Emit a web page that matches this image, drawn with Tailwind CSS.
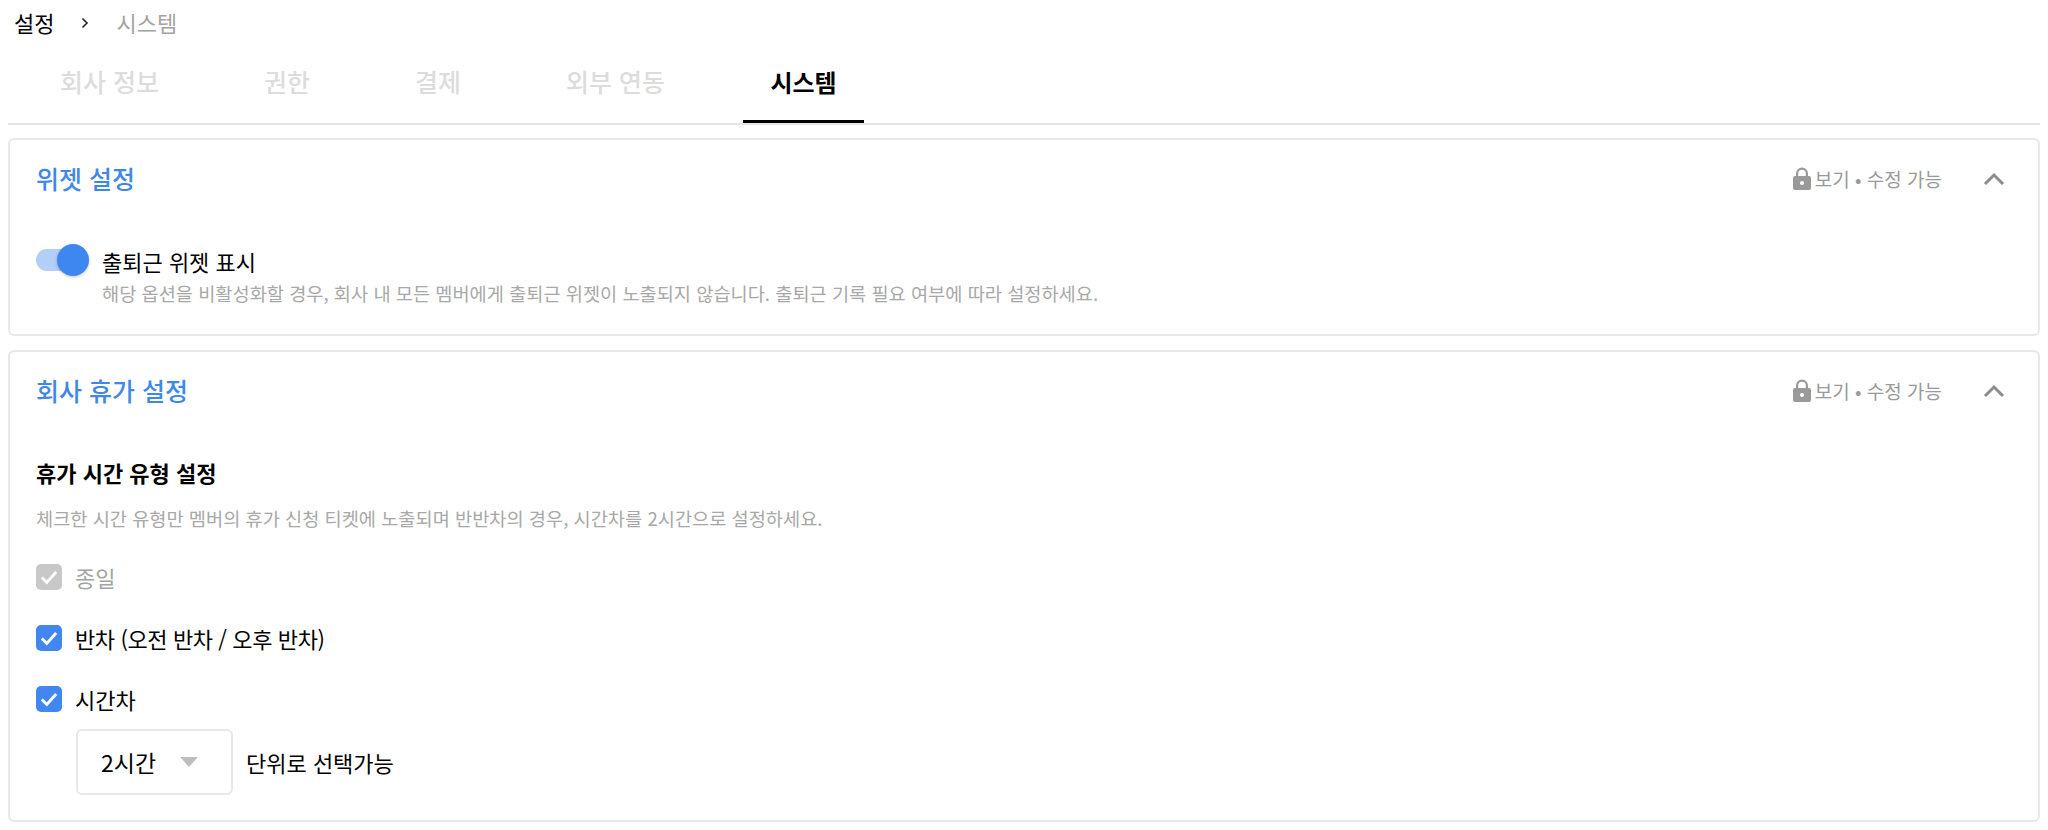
<!DOCTYPE html>
<html lang="ko">
<head>
  <meta charset="UTF-8">
  <title>시스템 설정</title>
  <script src="https://cdn.jsdelivr.net/npm/@tailwindcss/browser@4"></script>
</head>
<body class="bg-white h-[830px] overflow-hidden font-['Noto_Sans_CJK_KR','Noto_Sans',sans-serif] text-black">
  <!-- breadcrumb -->
  <div class="flex items-center h-[43px] pl-[14px] text-[22px] leading-none">
    <span>설정</span>
    <svg class="w-[12px] h-[12px] ml-[25px] mr-[25px] mt-[3px]" viewBox="0 0 12 12" fill="none" stroke="#222" stroke-width="1.6"><path d="M3.500 1.500 8 6l-4.500 4.500"/></svg>
    <span class="text-[#a3a3a3]">시스템</span>
  </div>

  <!-- tabs -->
  <div class="mx-[8px] flex h-[82px] border-b-2 border-[#e5e5e5] text-[25px] font-medium text-[#dcdcdc]">
    <div class="w-[204px] pl-[52px] pt-[20px] whitespace-nowrap">회사 정보</div>
    <div class="w-[151px] pl-[52px] pt-[20px] whitespace-nowrap">권한</div>
    <div class="w-[151px] pl-[52px] pt-[20px] whitespace-nowrap">결제</div>
    <div class="w-[229px] pl-[52px] pt-[20px] whitespace-nowrap">외부 연동</div>
    <div class="w-[121px] h-[80px] border-b-[3px] border-black text-black text-[24px] font-bold text-center pt-[21px]">시스템</div>
  </div>

  <!-- 위젯 설정 -->
  <section class="mx-[8px] mt-[13px] h-[198px] border-2 border-[#e8e8e8] rounded-[6px] px-[26px]">
    <div class="flex items-center justify-between h-[78px]">
      <h2 class="text-[25px] font-medium text-[#3f87e8]">위젯 설정</h2>
      <div class="flex items-center">
        <svg class="w-[20px] h-[24px]" viewBox="0 0 20 24" fill="#9a9a9a"><path fill-rule="evenodd" d="M4 9V6.500a6 6 0 0 1 12 0V9h1a2 2 0 0 1 2 2v10a2 2 0 0 1-2 2H3a2 2 0 0 1-2-2V11a2 2 0 0 1 2-2h1Zm2.200 0h7.600V6.500a3.800 3.800 0 0 0-7.600 0V9ZM10 14a2 2 0 1 0 0 4 2 2 0 0 0 0-4Z"/></svg>
        <span class="ml-[3px] text-[19px] text-[#9a9a9a]">보기 • 수정 가능</span>
        <svg class="w-[22px] h-[14px] ml-[41px] mr-[7px]" viewBox="0 0 22 14" fill="none" stroke="#8c8c8c" stroke-width="3"><path d="M2 12 11 3l9 9"/></svg>
      </div>
    </div>
    <div class="flex mt-[28px]">
      <div class="relative w-[52px] h-[30px] shrink-0 mt-[-1px]">
        <div class="absolute left-0 top-[4px] w-[48px] h-[22px] rounded-full bg-[#b4cff7]"></div>
        <div class="absolute right-[-1px] top-[-1px] w-[32px] h-[32px] rounded-full bg-[#3f87f0] shadow-[0_1px_3px_rgba(0,0,0,0.25)]"></div>
      </div>
      <div class="ml-[14px]">
        <div class="text-[22px] leading-[30px]">출퇴근 위젯 표시</div>
        <div class="mt-[2px] text-[18.65px] leading-[30px] text-[#a8a8a8]">해당 옵션을 비활성화할 경우, 회사 내 모든 멤버에게 출퇴근 위젯이 노출되지 않습니다. 출퇴근 기록 필요 여부에 따라 설정하세요.</div>
      </div>
    </div>
  </section>

  <!-- 회사 휴가 설정 -->
  <section class="mx-[8px] mt-[14px] h-[472px] border-2 border-[#e8e8e8] rounded-[6px] px-[26px]">
    <div class="flex items-center justify-between h-[78px]">
      <h2 class="text-[25px] font-medium text-[#3f87e8]">회사 휴가 설정</h2>
      <div class="flex items-center">
        <svg class="w-[20px] h-[24px]" viewBox="0 0 20 24" fill="#9a9a9a"><path fill-rule="evenodd" d="M4 9V6.500a6 6 0 0 1 12 0V9h1a2 2 0 0 1 2 2v10a2 2 0 0 1-2 2H3a2 2 0 0 1-2-2V11a2 2 0 0 1 2-2h1Zm2.200 0h7.600V6.500a3.800 3.800 0 0 0-7.600 0V9ZM10 14a2 2 0 1 0 0 4 2 2 0 0 0 0-4Z"/></svg>
        <span class="ml-[3px] text-[19px] text-[#9a9a9a]">보기 • 수정 가능</span>
        <svg class="w-[22px] h-[14px] ml-[41px] mr-[7px]" viewBox="0 0 22 14" fill="none" stroke="#8c8c8c" stroke-width="3"><path d="M2 12 11 3l9 9"/></svg>
      </div>
    </div>
    <h3 class="mt-[27px] text-[22px] leading-[30px] font-bold">휴가 시간 유형 설정</h3>
    <p class="mt-[18px] text-[18.65px] leading-[26px] text-[#a8a8a8]">체크한 시간 유형만 멤버의 휴가 신청 티켓에 노출되며 반반차의 경우, 시간차를 2시간으로 설정하세요.</p>
    <div class="mt-[31px] flex flex-col gap-[31px]">
      <label class="flex items-center h-[30px] text-[22px] text-[#a3a3a3]">
        <span class="flex items-center justify-center w-[26px] h-[26px] rounded-[5px] bg-[#c8c8c8]"><svg class="w-[22px] h-[22px]" viewBox="0 0 20 20" fill="none" stroke="#fff" stroke-width="2.600"><path d="m3.500 10.500 4.500 4.500 8.500-9.500"/></svg></span>
        <span class="ml-[13px]">종일</span>
      </label>
      <label class="flex items-center h-[30px] text-[22px]">
        <span class="flex items-center justify-center w-[26px] h-[26px] rounded-[5px] bg-[#4287f0]"><svg class="w-[22px] h-[22px]" viewBox="0 0 20 20" fill="none" stroke="#fff" stroke-width="2.600"><path d="m3.500 10.500 4.500 4.500 8.500-9.500"/></svg></span>
        <span class="ml-[13px] tracking-[-0.4px]">반차 (오전 반차 / 오후 반차)</span>
      </label>
      <label class="flex items-center h-[30px] text-[22px]">
        <span class="flex items-center justify-center w-[26px] h-[26px] rounded-[5px] bg-[#4287f0]"><svg class="w-[22px] h-[22px]" viewBox="0 0 20 20" fill="none" stroke="#fff" stroke-width="2.600"><path d="m3.500 10.500 4.500 4.500 8.500-9.500"/></svg></span>
        <span class="ml-[13px]">시간차</span>
      </label>
    </div>
    <div class="flex items-center mt-[15px] ml-[40px]">
      <div class="flex items-center w-[157px] h-[66px] border-2 border-[#e8e8e8] rounded-[6px] pl-[23px] text-[23px]">
        <span>2시간</span>
        <svg class="w-[18px] h-[10px] ml-[24px]" viewBox="0 0 16 9" fill="#bdbdbd"><path d="M0 0h16L8 9Z"/></svg>
      </div>
      <span class="ml-[13px] text-[22px]">단위로 선택가능</span>
    </div>
  </section>
</body>
</html>
